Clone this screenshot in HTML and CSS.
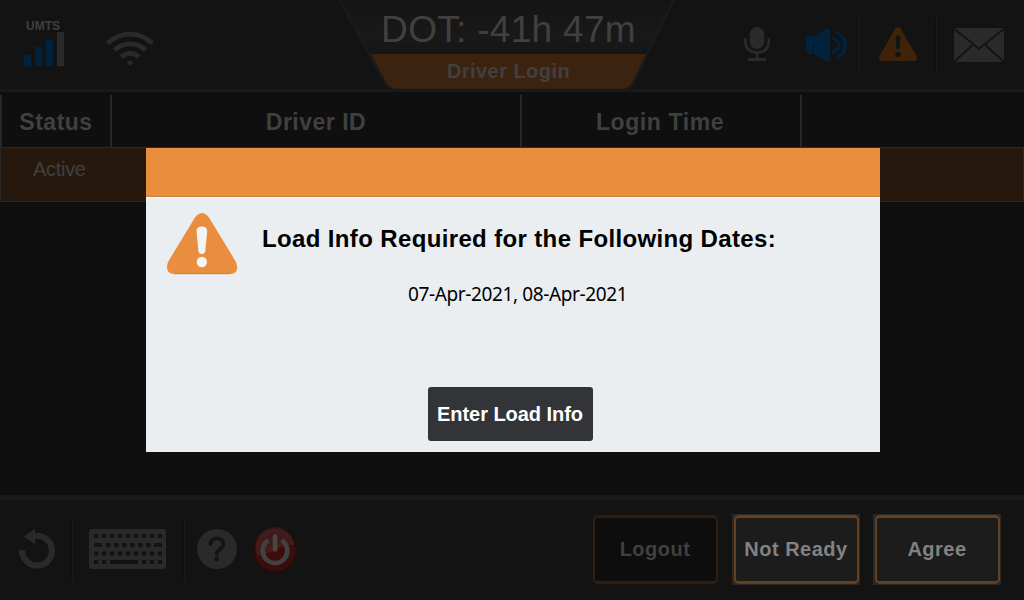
FILE: index.html
```html
<!DOCTYPE html>
<html lang="en">
<head>
<meta charset="utf-8">
<title>Driver Login</title>
<link rel="stylesheet" href="styles.css">
</head>
<body>
<div class="screen">
  <header class="topbar">
    <div class="signals">
      <div class="cell">
        <span class="cell-label">UMTS</span>
        <svg class="cell-bars" width="40" height="34" viewBox="0 0 40 34">
          <path class="blue" d="M0 23h7v11H0zM11 15h7v19h-7zM22 8h7v26h-7z"/>
          <path class="gray" d="M33 0h7v34h-7z"/>
        </svg>
      </div>
      <svg class="wifi" width="50" height="36" viewBox="0 0 50 36">
        <g class="gray-line" stroke-width="4.8">
          <path d="M2.5 12.300Q12.500 3.200 25 3.200T47.500 12.300"/>
          <path d="M9.300 19Q16 12.800 25 12.800T40.700 19"/>
          <path d="M16.300 26Q20 22.400 25 22.400T33.700 26"/>
        </g>
        <path class="gray" d="M21.500 31.300Q25 28.300 28.500 31.300L25 35z"/>
      </svg>
    </div>
    <div class="status">
      <svg class="status-shape" width="346" height="92" viewBox="0 0 346 92">
        <defs>
          <linearGradient id="plate" x1="0" y1="0" x2="0" y2="1">
            <stop offset="0" stop-color="#141414"/><stop offset=".7" stop-color="#191919"/><stop offset="1" stop-color="#151515"/>
          </linearGradient>
        </defs>
        <path d="M2 0L47 82Q50 89 57 89H290Q296 89 299 82L339 0z" fill="#1a1a1a"/>
        <path d="M5 0L35 54H310L336 0z" fill="url(#plate)"/>
        <path d="M35 54H310L296.500 82Q293 88.700 286 88.700H60Q54 88.700 50 82z" fill="#3b2310"/>
      </svg>
      <div class="clock">DOT: -41h 47m</div>
      <div class="page-name">Driver Login</div>
    </div>
    <div class="tools">
      <svg class="mic" width="26" height="34" viewBox="0 0 26 34">
        <rect class="gray" x="5.700" y="0" width="14.600" height="22" rx="7.300"/>
        <path class="gray-line" stroke-width="2.600" d="M1.300 11v4.500Q2.500 25.500 13 25.500T24.700 15.500V11M13 25v7"/>
        <rect class="gray" x="3.500" y="31" width="19" height="3" rx="1"/>
      </svg>
      <svg class="speaker" width="42" height="35" viewBox="0 0 42 35">
        <path class="blue" d="M1.500 8H7v18H1.500Q0 26 0 24V10Q0 8 1.500 8zM8 8L20 .8Q24 -1 24 2V32Q24 35.500 20 33.200L8 26z"/>
        <path class="blue-line" d="M27.500 10.500Q33 13 33 17.200T27.500 24M31.500 5Q39.500 9.500 39.500 17.200T31.500 29.500"/>
      </svg>
      <i class="rule rule-a"></i>
      <svg class="alert" width="38" height="34" viewBox="0 0 38 34">
        <path d="M16.500 1.300Q19 -1.200 21.500 1.300L37.500 29Q39 34 35.500 34H2.500Q-1 34 .5 29z" fill="#3e220a"/>
        <path d="M16.500 9.500Q19 8 21.500 9.500L20.600 22H17.400z" fill="#131313"/>
        <circle cx="19" cy="27.300" r="2.600" fill="#131313"/>
      </svg>
      <i class="rule rule-b"></i>
      <svg class="mail" width="50" height="34" viewBox="0 0 50 34">
        <rect class="gray" width="50" height="34"/>
        <path d="M0 .8L25 20.700 50 .8M0 34L18.500 17M50 34L31.500 17" fill="none" stroke="#131313" stroke-width="2"/>
      </svg>
    </div>
  </header>

  <main class="content">
    <div class="row head">
      <div>Status</div><div>Driver ID</div><div class="login">Login Time</div><div></div>
    </div>
    <div class="row active"><div>Active</div></div>
  </main>

  <footer class="bottombar">
    <svg class="undo" width="37" height="40" viewBox="0 0 37 40">
      <path class="gray-line" stroke-width="6.200" d="M3.200 21A14.900 14.900 0 1 0 15.500 7"/>
      <path class="gray" d="M4.500 7.800L16 0V15z"/>
    </svg>
    <i class="rule rule-c"></i>
    <svg class="keyboard" width="77" height="40" viewBox="0 0 77 40">
      <rect class="gray" width="77" height="40" rx="3"/>
      <g stroke="#131313" stroke-width="4">
        <path d="M5 7h68" stroke-dasharray="4.500 3.450"/>
        <path d="M5 16h8M17 16h4.500M25 16h4.500M33 16h4.500M41 16h4.500M49 16h4.500M57 16h4.500M65 16h8"/>
        <path d="M5 24.500h68" stroke-dasharray="4.500 3.450"/>
        <path d="M5 33h4.500M13 33h4.500M21 33h28M52.800 33h4.500M60.600 33h4.500M68.500 33h4.500"/>
      </g>
    </svg>
    <i class="rule rule-d"></i>
    <svg class="help" width="40" height="40" viewBox="0 0 40 40">
      <circle class="gray" cx="20" cy="20" r="20"/>
      <path d="M13.500 15Q14 9.500 20 9.500T26.500 15Q26.500 17.500 23 20T19.800 25" fill="none" stroke="#131313" stroke-width="3.600" stroke-linecap="round"/>
      <circle cx="19.800" cy="29.800" r="2.400" fill="#131313"/>
    </svg>
    <svg class="power" width="44" height="46" viewBox="0 0 44 46">
      <defs>
        <radialGradient id="red" cx=".5" cy=".5" r=".5">
          <stop offset="0" stop-color="#480c0c"/><stop offset=".65" stop-color="#330b0b"/><stop offset=".9" stop-color="#3c0e0e"/><stop offset="1" stop-color="#230a09"/>
        </radialGradient>
      </defs>
      <ellipse cx="22" cy="23" rx="21.500" ry="22" fill="url(#red)" stroke="#2b0906"/>
      <path d="M3 21A19 19.500 0 0 1 41 18Q30 18 22 23T5 29Q3 26 3 21z" fill="#777" opacity=".14"/>
      <path d="M15.500 13.300A12.300 12.300 0 1 0 28.500 13.300" fill="none" stroke="#434040" stroke-width="4.800"/>
      <path d="M22 9.500v13" fill="none" stroke="#494545" stroke-width="4.500" stroke-linecap="round"/>
    </svg>
    <div class="actions">
      <button class="action disabled"><span>Logout</span></button>
      <button class="action"><span>Not Ready</span></button>
      <button class="action"><span>Agree</span></button>
    </div>
  </footer>

  <section class="dialog">
    <div class="dialog-bar"></div>
    <div class="dialog-body">
      <svg class="warning" width="72" height="62" viewBox="0 0 72 62">
        <path d="M28 4.500Q35 -4.500 42 4.500L69 49Q73 60.500 63.500 61H7Q-2.500 60.500 1 49z" fill="#e98e3e"/>
        <path d="M7 60.700H63" stroke="#cb8140"/>
        <path d="M29.500 18Q29.500 13.500 34.800 13.500T40.200 18L38.200 38.500Q37.500 41 34.800 41T31.500 38.500z" fill="#f3f4f5"/>
        <circle cx="34.800" cy="49" r="5.200" fill="#f3f4f5"/>
      </svg>
      <div class="message">
        <h1>Load Info Required for the Following Dates:</h1>
        <p>07-Apr-2021, 08-Apr-2021</p>
      </div>
      <button class="enter">Enter Load Info</button>
    </div>
  </section>
</div>
</body>
</html>
```
FILE: styles.css
```css
* { box-sizing: border-box; }
body { margin: 0; background: #0f0f0f; font-family: "Liberation Sans", Arial, sans-serif; }
button { margin: 0; padding: 0; font-family: inherit; }
svg { display: block; flex: none; overflow: visible; }
.screen { position: relative; display: flex; flex-direction: column; width: 1024px; height: 600px; overflow: hidden; color: #404040; }
.gray { fill: #2a2a2a; }
.blue { fill: #00223d; }
.gray-line { fill: none; stroke: #2a2a2a; }
.blue-line { fill: none; stroke: #00223d; stroke-width: 3.4; stroke-linecap: round; }
.rule { flex: none; width: 2px; background: #1b1b1b; border-left: 1px solid #0f0f0f; }

.topbar { display: flex; height: 92px; background: #131313; border-bottom: 3px solid #1a1a1a; }
.signals { display: flex; width: 336px; padding: 19px 0 0 24px; }
.cell-label { display: block; height: 13px; padding-left: 2px; font: bold 12px/14px "Liberation Sans", Arial, sans-serif; }
.wifi { margin: 12px 0 0 41px; }
.status { position: relative; width: 346px; height: 92px; text-align: center; }
.status-shape { position: absolute; inset: 0; }
.clock { position: relative; padding: 9px 1px 0 0; font-size: 37px; line-height: 41px; letter-spacing: .3px; }
.page-name { position: relative; padding: 9px 1px 0 0; font-size: 20px; line-height: 24px; font-weight: bold; letter-spacing: .45px; }
.tools { display: flex; padding-left: 62px; }
.mic { margin-top: 27px; }
.speaker { margin: 28px 0 0 36px; }
.alert { margin: 27px 0 0 20px; }
.mail { margin: 28px 0 0 17px; }
.rule-a, .rule-b { height: 55px; margin-top: 17px; }
.rule-a { margin-left: 9px; }
.rule-b { margin-left: 18px; }

.content { flex: 1; padding-top: 3px; }
.row.head { display: grid; grid-template: 52px / 110px 410px 280px 1fr; height: 52px; font-size: 23px; line-height: 55px; font-weight: bold; letter-spacing: .5px; text-align: center; }
.head div { border-left: 2px solid #282828; }
.head .login { padding-right: 2px; letter-spacing: .6px; }
.row.active { height: 55px; padding: 9px 0 0 32px; border: 1px solid #282828; background: #26180c; font-size: 20px; line-height: 24px; letter-spacing: -.3px; }

.bottombar { display: flex; height: 105px; background: #131313; border-top: 5px solid #1a1a1a; padding-left: 19px; }
.undo, .keyboard, .help { margin-top: 29px; }
.keyboard { margin-left: 16px; }
.help { margin-left: 12px; }
.power { margin: 27px 0 0 16px; }
.rule-c, .rule-d { height: 62px; margin-top: 19px; }
.rule-c { margin-left: 15px; }
.rule-d { margin-left: 17px; }
.actions { display: flex; gap: 13px; margin: 14px 0 0 294px; }
.action { width: 128px; height: 71px; padding: 1px; border: 0; background: #282828; color: #828282; font-size: 20px; font-weight: bold; letter-spacing: .5px; }
.action span { display: flex; align-items: center; justify-content: center; height: 69px; margin: 0 0 0 1px; padding-right: 1px; border: 2px solid #66401e; border-top-width: 3px; border-bottom-width: 3px; border-radius: 5px; background: #1c1c1c; }
.action.disabled { background: none; color: #404040; }
.disabled span { background: #0d0d0d; border-color: #331e0e; }

.dialog { position: absolute; left: 146px; top: 148px; width: 734px; height: 304px; background: #eaeef1; color: #000; }
.dialog-bar { height: 50px; background: #e98e3d; border-bottom: 1px solid #fafafa; box-shadow: inset 0 -1px #cc8240; }
.dialog-body { display: grid; grid-template-columns: 95px 1fr; padding: 15px 0 0 21px; }
.message { padding-top: 10px; }
.message h1 { margin: 0; font-size: 24px; line-height: 32px; letter-spacing: .36px; white-space: nowrap; }
.message p { margin: 26px 0 0 146px; font: 19px/26px "Noto Sans", sans-serif; letter-spacing: -.38px; white-space: nowrap; }
.enter { grid-column: 1 / 3; width: 165px; height: 54px; margin: 80px 0 0 261px; padding-right: 1px; border: 0; border-radius: 3px; background: #333438; color: #fff; font-size: 20px; font-weight: bold; letter-spacing: -.05px; }
```
